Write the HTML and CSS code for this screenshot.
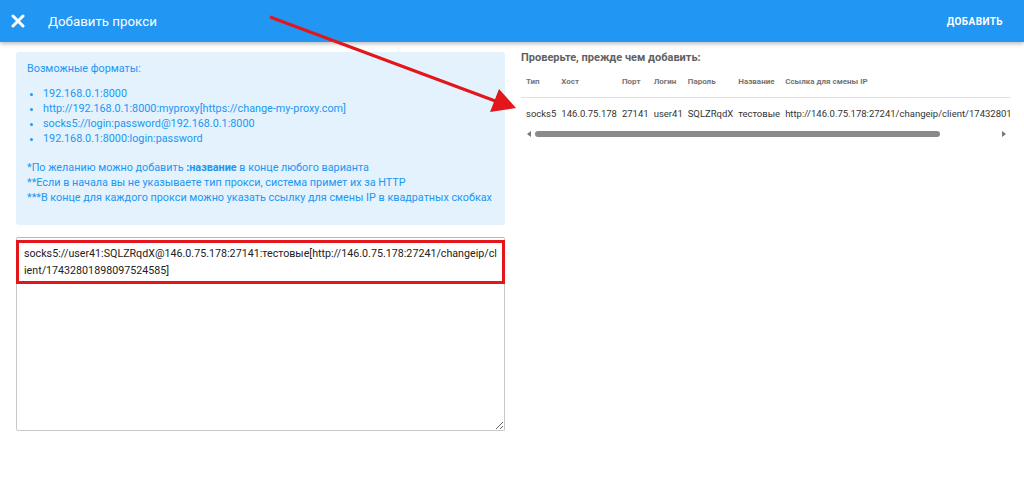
FILE: index.html
```html
<!DOCTYPE html>
<html lang="ru">
<head>
  <meta charset="UTF-8" />
  <title>Добавить прокси</title>
  <link rel="stylesheet" href="styles.css">
</head>
<body>
  <div class="topbar">
    <span class="close-btn">
      <svg width="14" height="14" viewBox="0 0 14 14"><path d="M2 2 L12 12 M12 2 L2 12" stroke="#fff" stroke-width="3" stroke-linecap="round"/></svg>
    </span>
    <span class="title">Добавить прокси</span>
    <span class="add-btn">Добавить</span>
  </div>

  <div class="main-grid">
    <div class="left">
      <div class="info">
        <div class="info-title">Возможные форматы:</div>
        <ul>
          <li>192.168.0.1:8000</li>
          <li>http://192.168.0.1:8000:myproxy[https://change-my-proxy.com]</li>
          <li>socks5://login:password@192.168.0.1:8000</li>
          <li>192.168.0.1:8000:login:password</li>
        </ul>
        <div class="notes">
          *По желанию можно добавить <b>:название</b> в конце любого варианта<br>
          **Если в начала вы не указываете тип прокси, система примет их за HTTP<br>
          ***В конце для каждого прокси можно указать ссылку для смены IP в квадратных скобках
        </div>
      </div>
      <div class="input-wrap">
        <textarea id="proxies">socks5://user41:SQLZRqdX@146.0.75.178:27141:тестовые[http://146.0.75.178:27241/changeip/client/17432801898097524585]</textarea>
        <div class="mark"></div>
      </div>
    </div>

    <div class="right">
      <h3>Проверьте, прежде чем добавить:</h3>
      <div class="table-wrap">
        <table class="preview">
          <tr>
            <th>Тип</th><th>Хост</th><th>Порт</th><th>Логин</th><th>Пароль</th><th>Название</th><th>Ссылка для смены IP</th>
          </tr>
          <tr>
            <td>socks5</td><td>146.0.75.178</td><td>27141</td><td>user41</td><td>SQLZRqdX</td><td>тестовые</td><td>http://146.0.75.178:27241/changeip/client/17432801898097524585</td>
          </tr>
        </table>
      </div>
      <div class="fake-scroll">
        <span class="arr-left"></span>
        <div class="thumb"></div>
        <span class="arr-right"></span>
      </div>
    </div>
  </div>

  <svg class="pointer" width="1024" height="482" viewBox="0 0 1024 482">
    <line x1="270" y1="17" x2="498" y2="102" stroke="#e3161b" stroke-width="3"/>
    <polygon points="516,108 490,112 499,89" fill="#e3161b"/>
  </svg>
</body>
</html>
```

FILE: styles.css
```css
body {
  margin: 0;
  font-family: Roboto, "Liberation Sans", sans-serif;
  background: #fff;
  color: #333;
}
.topbar {
  height: 42px;
  background-color: #2196f3;
  color: white;
  display: flex;
  align-items: center;
  padding: 0 21px 0 11px;
  box-shadow: 0 2px 4px rgba(0,0,0,0.25);
  position: relative;
}
.close-btn {
  width: 14px;
  height: 14px;
  display: flex;
  margin-right: 23px;
}
.title {
  font-size: 13.3px;
  flex: 1;
}
.add-btn {
  font-size: 10px;
  font-weight: bold;
  text-transform: uppercase;
  letter-spacing: 0.4px;
}
.main-grid {
  display: grid;
  grid-template-columns: 489px 489px;
  gap: 16px;
  padding: 10px 14px 0 16px;
}
.info {
  background-color: #e3f2fd;
  color: #2196f3;
  border-radius: 3px;
  padding: 9px 11px 20px;
  font-size: 10.8px;
  line-height: 15px;
}
.info-title {
  margin-bottom: 10px;
}
.info ul {
  margin: 0 0 14px;
  padding-left: 16px;
}
.info b {
  font-weight: bold;
}
.input-wrap {
  position: relative;
  margin-top: 12px;
}
textarea {
  display: block;
  width: 100%;
  height: 194px;
  box-sizing: border-box;
  border: 1px solid #c8c8c8;
  border-top-color: #b8b8b8;
  border-radius: 2px;
  padding: 7px 7px;
  font-family: Roboto, "Liberation Sans", sans-serif;
  font-size: 10.7px;
  line-height: 17px;
  color: #222;
  resize: vertical;
  word-break: break-all;
}
.mark {
  position: absolute;
  left: 0;
  right: 0;
  top: 3px;
  height: 44px;
  border: 3px solid #e3161b;
  box-sizing: border-box;
  pointer-events: none;
}
.right h3 {
  margin: 0;
  font-size: 11px;
  font-weight: bold;
  color: #616161;
  line-height: 12px;
}
.table-wrap {
  overflow: hidden;
  margin-top: 1px;
}
.preview {
  border-collapse: collapse;
  white-space: nowrap;
}
.preview th {
  font-size: 8px;
  font-weight: bold;
  color: #757575;
  text-align: left;
  height: 32px;
  padding: 0 0 0 5px;
  border-bottom: 1px solid #e0e0e0;
}
.preview td {
  font-size: 9.5px;
  color: #333;
  height: 31px;
  padding: 0 0 0 5px;
}
.fake-scroll {
  display: flex;
  align-items: center;
  height: 10px;
  padding: 0 4px 0 6px;
}
.arr-left, .arr-right {
  width: 0;
  height: 0;
  border-top: 3px solid transparent;
  border-bottom: 3px solid transparent;
}
.arr-left {
  border-right: 4px solid #777;
}
.arr-right {
  border-left: 4px solid #777;
  margin-left: auto;
}
.thumb {
  width: 405px;
  height: 6px;
  border-radius: 3px;
  background: #8a8a8a;
  margin-left: 4px;
}
.pointer {
  position: absolute;
  left: 0;
  top: 0;
  pointer-events: none;
}
```
